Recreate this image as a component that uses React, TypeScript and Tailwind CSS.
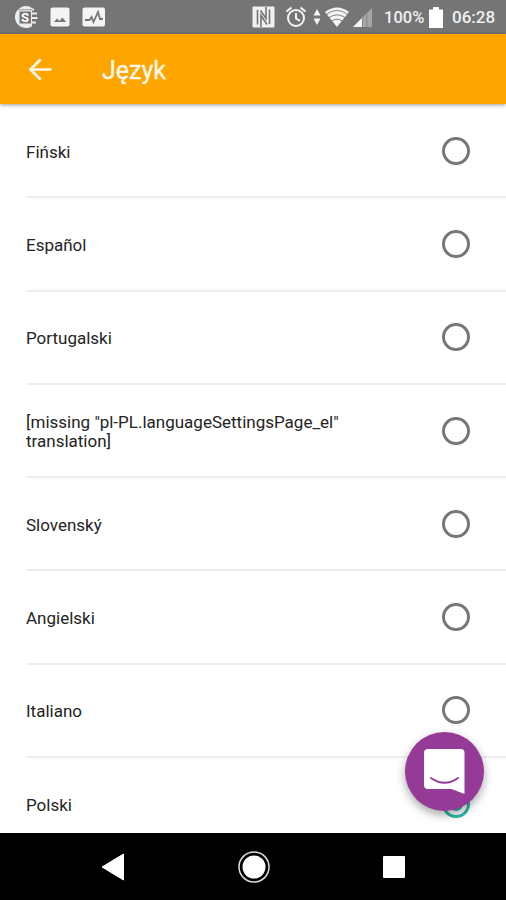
const languages = [
  'Fiński',
  'Español',
  'Portugalski',
  '[missing "pl-PL.languageSettingsPage_el" translation]',
  'Slovenský',
  'Angielski',
  'Italiano',
  'Polski',
];

function StatusBar() {
  return (
    <div className="flex h-[34px] shrink-0 items-center bg-[#757575] pr-[11px] pl-[14px] text-[#f0f0f0]">
      <svg width="24" height="24" viewBox="0 0 24 24" className="shrink-0">
        <path d="M12 1a11 11 0 1 0 6 20.200V3A11 11 0 0 0 12 1Z" fill="#ececec" />
        <path d="M16 4.500h4M18 8.500h5M18 13h5.500M17 17.500h5" stroke="#ececec" strokeWidth="2" />
        <path d="M5.500 6.500H17V18.500H5.500z" fill="#757575" />
        <path d="M4 4.800h14" stroke="#999" />
        <text x="7" y="17" fontSize="13" fontWeight="700" fill="#fff" fontFamily="Roboto, sans-serif">S</text>
      </svg>
      <svg width="20" height="20" viewBox="0 0 20 20" className="ml-3 shrink-0">
        <rect x="0.5" y="0.5" width="19" height="19" rx="2" fill="#f4f4f4" />
        <path d="m4 15 3-3.500L9.500 14l3-3.500L16 15Z" fill="#757575" />
      </svg>
      <svg width="24" height="20" viewBox="0 0 24 20" className="ml-3 shrink-0">
        <rect x="0.5" y="0.5" width="22.5" height="19" rx="2" fill="#f4f4f4" />
        <path d="M3 13h4.500l2-3 2 5 4.500-10 2 7h3" fill="none" stroke="#757575" strokeWidth="1.8" />
      </svg>
      <svg width="23" height="22" viewBox="0 0 23 22" className="ml-auto shrink-0">
        <rect x="0.500" y="0.500" width="22" height="21" rx="1" fill="#f0f0f0" />
        <path d="M5.500 4v14.500M9 21V9.500l6 9M17.500 18V3.500M14 1v11.500L8.500 4.500" fill="none" stroke="#757575" strokeWidth="1.600" />
      </svg>
      <svg width="22" height="22" viewBox="0 0 22 22" className="ml-[10px] shrink-0" fill="none" stroke="#f4f4f4" strokeWidth="2">
        <circle cx="11" cy="12" r="8" />
        <path d="m1.500 5.500 5-4M20.500 5.500l-5-4M11 7v5.500l4 2.300" />
      </svg>
      <svg width="8" height="18" viewBox="0 0 8 18" className="ml-[6px] shrink-0" fill="#f4f4f4">
        <path d="M4 1 7.500 7.500h-7ZM4 17 .5 10.500h7Z" />
      </svg>
      <svg width="24" height="20" viewBox="0 0 24 20" className="ml-1 shrink-0">
        <path d="M0 5Q12-4 24 5L12 20Z" fill="#f4f4f4" />
        <path d="M1.500 7.200Q12-.3 22.500 7.200M4 10.600q8-5.600 16 0M7 14q5-3.600 10 0" fill="none" stroke="#757575" strokeWidth="0.9" />
      </svg>
      <svg width="19" height="19" viewBox="0 0 19 19" className="ml-1 shrink-0">
        <path d="M19 0v19H0Z" fill="#a5a5a5" />
        <path d="M9 10v9H0Z" fill="#f4f4f4" />
        <path d="M9.500 8v11M14 4v15" stroke="#858585" />
      </svg>
      <span className="ml-3 w-[40px] pt-0.5 text-[16.500px] leading-none font-medium whitespace-nowrap">100%</span>
      <svg width="14" height="21" viewBox="0 0 14 21" className="ml-[5px] shrink-0">
        <path d="M4 0h6v2.500h4V21H0V2.500h4Z" fill="#fff" />
      </svg>
      <span className="ml-[9px] w-[43px] pt-px text-[17px] leading-none font-medium whitespace-nowrap">06:28</span>
    </div>
  );
}

function Header() {
  return (
    <header className="z-10 flex h-[70px] shrink-0 items-center bg-[#ffa500] pl-[28px] text-[#fff9ed] shadow-[0_1px_4px_rgba(0,0,0,0.4)]">
      <svg width="24" height="24" viewBox="0 0 24 24" fill="none" stroke="currentColor" strokeWidth="2.700">
        <path d="M23.500 12.500H3M12.500 2.500l-10 10 10 10" />
      </svg>
      <h1 className="mt-[3px] ml-[50px] text-[25px] leading-8 font-normal [-webkit-text-stroke:0.3px_#fff9ed]">Język</h1>
    </header>
  );
}

function LanguageRow({ label, selected }: { label: string; selected: boolean }) {
  return (
    <li className="ml-[26px] flex h-[93.3px] shrink-0 items-center justify-between border-b-2 border-[#eeeeee] pr-[36px]">
      <span className="w-[330px] pt-[3px] text-[17px] leading-[19px] text-[#242424]">{label}</span>
      <span
        className={
          selected
            ? 'flex size-7 items-center justify-center rounded-full border-[3px] border-[#26bba9]'
            : 'size-7 rounded-full border-3 border-[#777777]'
        }
      >
        {selected && <span className="size-3.5 rounded-full bg-[#26bba9]" />}
      </span>
    </li>
  );
}

function ChatButton() {
  return (
    <button className="absolute right-[22px] bottom-[22px] z-20 flex size-[79px] items-center justify-center rounded-full bg-[#963a97] shadow-[0_4px_10px_rgba(0,0,0,0.35)]">
      <svg width="42" height="48" viewBox="0 0 42 48">
        <path d="M4 1h33q3.500 0 3.500 4v41l-13-5H4q-4 0-4-4V5q0-4 4-4Z" fill="#fff" />
        <path d="M7 30q13.500 9.500 27 0" fill="none" stroke="#963a97" strokeWidth="2" strokeLinecap="round" />
      </svg>
    </button>
  );
}

function NavigationBar() {
  return (
    <nav className="z-10 flex h-[67px] shrink-0 items-center justify-between bg-black pr-[101px] pl-[101px]">
      <svg width="24" height="28" viewBox="0 0 24 28">
        <path d="M22.500 1v26L1 14Z" fill="#fff" stroke="#fff" strokeLinejoin="round" />
      </svg>
      <svg width="32" height="32" viewBox="0 0 32 32">
        <circle cx="16" cy="16" r="15" fill="none" stroke="#ddd" strokeWidth="1.500" />
        <circle cx="16" cy="16" r="11.500" fill="#fff" />
      </svg>
      <span className="size-[22px] rounded-[1px] bg-white" />
    </nav>
  );
}

export default function App() {
  return (
    <div className="flex h-[900px] w-[506px] flex-col overflow-hidden bg-white font-[Roboto,sans-serif]">
      <StatusBar />
      <Header />
      <main className="relative flex min-h-0 flex-1 flex-col">
        <ul className="flex min-h-0 flex-1 flex-col overflow-hidden pt-px">
          {languages.map((label) => (
            <LanguageRow key={label} label={label} selected={label === 'Polski'} />
          ))}
        </ul>
        <ChatButton />
      </main>
      <NavigationBar />
    </div>
  );
}
